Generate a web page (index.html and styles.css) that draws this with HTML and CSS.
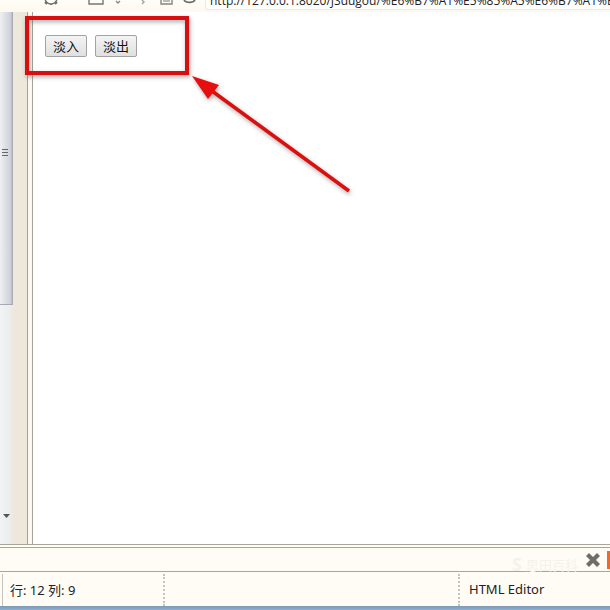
FILE: index.html
```html
<!DOCTYPE html>
<html lang="zh">
<head>
<meta charset="utf-8">
<title>HTML Editor</title>
<link rel="stylesheet" href="styles.css">
</head>
<body>
<div class="window">
  <header class="toolbar">
    <svg class="tool-icons" width="160" height="12" viewBox="0 0 160 12" fill="none" stroke="#6f6f6b" stroke-width="1.4">
      <circle cx="10" cy="-2" r="6"/>
      <path d="M4 2l2 2M16 2l-2 2M10 4v1" stroke-width="2"/>
      <path d="M48 0v4h14V0" stroke="#77776f"/>
      <path d="M75 1l2 2 2-2" stroke="#8a8a84"/>
      <path d="M101 0l2 2-2 2" stroke="#a5a5a0"/>
      <path d="M120 0v4h11V0" stroke="#85857f"/>
      <path d="M122 1h7" stroke="#a0a09a"/>
      <path d="M143 0a6 4 0 0 0 11 0" stroke="#6a6a66" stroke-width="1.6"/>
    </svg>
    <div class="url-box">http://127.0.0.1:8020/JSdugou/%E6%B7%A1%E5%85%A5%E6%B7%A1%E5%87%BA.html</div>
  </header>
  <main class="workspace">
    <div class="scrollbar">
      <div class="thumb">
        <span class="grip"></span>
      </div>
      <div class="track">
        <svg class="down-arrow" width="7" height="4" viewBox="0 0 7 4"><path d="M0 0h7L3.5 4z" fill="#555"/></svg>
      </div>
    </div>
    <div class="sash"></div>
    <div class="gutter"></div>
    <div class="preview">
      <button class="demo-btn" type="button">淡入</button>
      <button class="demo-btn" type="button">淡出</button>
    </div>
  </main>
  <div class="thin-gap"></div>
  <div class="panel">
    <div class="watermark"><span class="wm-logo">S</span><span class="wm-text">思田百科</span></div>
    <svg class="close-icon" width="14" height="14" viewBox="0 0 14 14"><path d="M3 0l4 4 4-4 3 3-4 4 4 4-3 3-4-4-4 4-3-3 4-4-4-4z" fill="#6e6e6c"/></svg>
    <span class="orange-tab"></span>
  </div>
  <footer class="status">
    <div class="cell cell-pos">行: 12 列: 9</div>
    <div class="cell cell-mid"></div>
    <div class="cell cell-editor">HTML Editor</div>
  </footer>
  <div class="taskbar"></div>
</div>
<svg class="annotation" width="610" height="610" viewBox="0 0 610 610">
  <rect x="27" y="18" width="160" height="55" fill="none" stroke="#d90f0f" stroke-width="4"/>
  <path d="M349 191L212 91" stroke="#dc0f0f" stroke-width="3.6" fill="none"/>
  <path d="M192 76L219 85L208 99Z" fill="#e60e0e"/>
</svg>
</body>
</html>
```
FILE: styles.css
```css
* { box-sizing: border-box; }
html, body { margin: 0; height: 100%; }
body {
  width: 610px;
  height: 610px;
  overflow: hidden;
  position: relative;
  background: #fffcf5;
  font-family: "Noto Sans", "Noto Sans CJK SC", sans-serif;
}
.window {
  display: grid;
  grid-template-rows: 12px 533px 3px 24px 34px 4px;
  height: 610px;
}
.toolbar {
  display: flex;
  align-items: flex-start;
  padding-left: 41px;
  background: linear-gradient(#fffdf7, #fdf9ef);
  overflow: hidden;
}
.tool-icons { flex: none; }
.url-box {
  flex: 1;
  height: 10px;
  margin-left: 4px;
  padding-left: 4px;
  background: #fff;
  border: 1px solid #ece9e2;
  border-top: 0;
  border-right: 0;
  border-radius: 0 0 0 3px;
  font: 12px/2px "Open Sans", "Liberation Sans", sans-serif;
  color: #222;
  white-space: nowrap;
  overflow: hidden;
}
.workspace {
  display: flex;
  background: #fdfbf3;
  border-bottom: 1px solid #aaa598;
}
.scrollbar {
  flex: none;
  width: 13px;
  display: flex;
  flex-direction: column;
}
.thumb {
  height: 293px;
  display: flex;
  align-items: flex-start;
  padding: 137px 0 0 2px;
  background: linear-gradient(90deg, #eef0f4, #cfd0da 80%, #a4a4ae);
  border-bottom: 1px solid #a9a9b3;
}
.grip {
  width: 6px;
  height: 8px;
  background: repeating-linear-gradient(#666 0 1px, transparent 1px 3px);
}
.track {
  flex: 1;
  display: flex;
  flex-direction: column;
  justify-content: flex-end;
  padding: 0 0 26px 3px;
  background: linear-gradient(90deg, #f2f3f4, #eceded 70%, #ece9e0);
}
.sash {
  flex: none;
  width: 14px;
  background: #ede8da;
}
.gutter {
  flex: none;
  width: 6px;
  background: #fbf9f1;
  border-left: 1px solid #a5a399;
  border-right: 1px solid #a5a399;
}
.preview {
  flex: 1;
  display: flex;
  align-items: flex-start;
  gap: 8px;
  padding: 23px 0 0 12px;
  background: #fff;
}
.demo-btn {
  width: 42px;
  height: 22px;
  padding: 0 0 2px;
  border: 1px solid #a2a2a2;
  border-radius: 2px;
  background: linear-gradient(#f4f4f4, #e0e0e0);
  font: 13px "Noto Sans CJK SC", sans-serif;
  color: #111;
}
.thin-gap {
  background: #fffcf5;
  border-bottom: 1px solid #aaa598;
}
.panel {
  display: flex;
  align-items: center;
  background: #fffcf5;
  border-bottom: 1px solid #aaa598;
  padding-left: 518px;
  position: relative;
  height: 24px;
}
.watermark {
  position: absolute;
  left: 512px;
  top: 4px;
  display: flex;
  align-items: center;
  gap: 4px;
  color: #f6f2ea;
  white-space: nowrap;
  font-size: 13px;
}
.wm-logo { font-size: 18px; font-weight: 700; }
.close-icon {
  flex: none;
  margin-left: 68px;
  margin-top: 1px;
}
.orange-tab {
  width: 3px;
  height: 18px;
  margin-left: 7px;
  background: #ec6b2c;
}
.status {
  display: flex;
  background: #fffcf5;
  font-size: 13px;
  color: #222;
  align-items: stretch;
  padding: 2px 0 0 2px;
}
.cell {
  display: flex;
  align-items: center;
  padding-bottom: 2px;
}
.cell-pos {
  width: 163px;
  padding-left: 7px;
  border-left: 1px solid #c5c2b8;
  border-right: 2px dotted #c4c4c4;
}
.cell-mid {
  width: 295px;
  border-right: 2px dotted #c4c4c4;
}
.cell-editor { padding-left: 9px; }
.taskbar {
  background: linear-gradient(#7d97b2, #8fb0d0);
}
.annotation {
  position: absolute;
  left: 0;
  top: 0;
  pointer-events: none;
  filter: drop-shadow(1px 2px 2px rgba(80, 80, 80, .5));
}
```
